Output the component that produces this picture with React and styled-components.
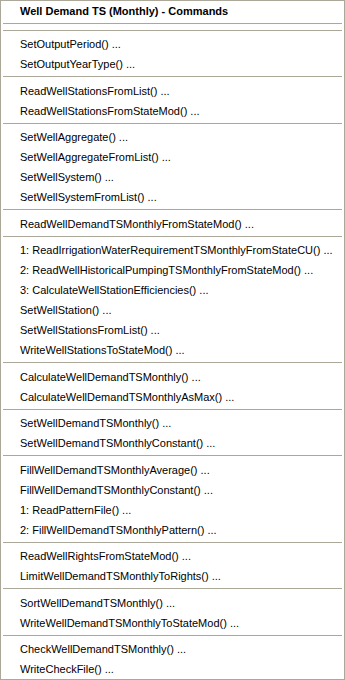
import React from "react";
import styled, { createGlobalStyle } from "styled-components";

const GlobalStyle = createGlobalStyle`
  html, body {
    margin: 0;
    padding: 0;
    background: #ffffff;
  }
`;

const Menu = styled.div`
  box-sizing: border-box;
  width: 345px;
  height: 680px;
  border: 1px solid #aca899;
  padding: 1px;
  background: #ffffff;
  font-family: "Liberation Sans", Arial, sans-serif;
  font-size: 11px;
  color: #000000;
  display: flex;
  flex-direction: column;
`;

const Title = styled.div`
  height: 18px;
  line-height: 18px;
  padding-left: 18px;
  font-weight: bold;
  white-space: nowrap;
`;

const Separator = styled.div`
  height: 8px;
  display: flex;
  align-items: flex-start;
  padding: 3px 1px 0;
  box-sizing: border-box;

  &::before {
    content: "";
    flex: 1;
    height: 1px;
    background: #aca899;
  }
`;

const Item = styled.div`
  box-sizing: border-box;
  height: 20px;
  padding-top: 2px;
  line-height: 18px;
  padding-left: 18px;
  white-space: nowrap;
`;

const groups = [
  ["SetOutputPeriod() ...", "SetOutputYearType() ..."],
  ["ReadWellStationsFromList() ...", "ReadWellStationsFromStateMod() ..."],
  [
    "SetWellAggregate() ...",
    "SetWellAggregateFromList() ...",
    "SetWellSystem() ...",
    "SetWellSystemFromList() ...",
  ],
  ["ReadWellDemandTSMonthlyFromStateMod() ..."],
  [
    "1: ReadIrrigationWaterRequirementTSMonthlyFromStateCU() ...",
    "2: ReadWellHistoricalPumpingTSMonthlyFromStateMod() ...",
    "3: CalculateWellStationEfficiencies() ...",
    "SetWellStation() ...",
    "SetWellStationsFromList() ...",
    "WriteWellStationsToStateMod() ...",
  ],
  ["CalculateWellDemandTSMonthly() ...", "CalculateWellDemandTSMonthlyAsMax() ..."],
  ["SetWellDemandTSMonthly() ...", "SetWellDemandTSMonthlyConstant() ..."],
  [
    "FillWellDemandTSMonthlyAverage() ...",
    "FillWellDemandTSMonthlyConstant() ...",
    "1: ReadPatternFile() ...",
    "2: FillWellDemandTSMonthlyPattern() ...",
  ],
  ["ReadWellRightsFromStateMod() ...", "LimitWellDemandTSMonthlyToRights() ..."],
  ["SortWellDemandTSMonthly() ...", "WriteWellDemandTSMonthlyToStateMod() ..."],
  ["CheckWellDemandTSMonthly() ...", "WriteCheckFile() ..."],
];

export default function App() {
  return (
    <>
      <GlobalStyle />
      <Menu>
        <Title>Well Demand TS (Monthly) - Commands</Title>
        <Separator />
        {groups.map((group, i) => (
          <React.Fragment key={i}>
            <Separator />
            {group.map((label) => (
              <Item key={label}>{label}</Item>
            ))}
          </React.Fragment>
        ))}
      </Menu>
    </>
  );
}
